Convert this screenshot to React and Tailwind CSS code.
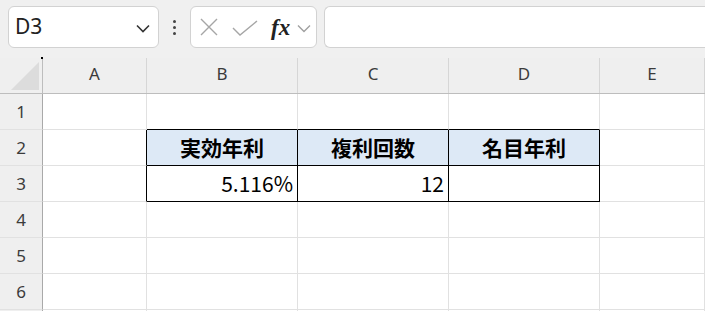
import React from "react";

const cols = ["A", "B", "C", "D", "E"];
const grid = "grid grid-cols-[43px_104px_151px_151px_151px_105px_1fr]";

// which cells get black borders (right / bottom) for the B2:D3 table
const blackRight = (r, c) => (r === 2 || r === 3) && c >= 0 && c <= 3;
const blackBottom = (r, c) => (r >= 1 && r <= 3) && c >= 1 && c <= 3;

const data = {
  "2-1": { text: "実効年利", head: true },
  "2-2": { text: "複利回数", head: true },
  "2-3": { text: "名目年利", head: true },
  "3-1": { text: "5.116%" },
  "3-2": { text: "12" },
};

const Cell = ({ r, c }) => {
  const d = data[`${r}-${c}`];
  const br = blackRight(r, c) ? "border-r-black" : "border-r-[#e1e1e1]";
  const bb = blackBottom(r, c) ? "border-b-black" : "border-b-[#e1e1e1]";
  const bg = d && d.head ? "bg-[#dde9f6]" : "bg-white";
  return (
    <div
      className={`h-[36px] border-r border-b ${br} ${bb} ${bg} flex items-center px-[4px] text-black ${
        d && d.head ? "justify-center font-bold text-[21px]" : "justify-end text-[21px]"
      }`}
      style={{ fontFamily: '"Noto Sans CJK JP", sans-serif' }}
    >
      {d ? d.text : ""}
    </div>
  );
};

export default function App() {
  return (
    <div
      className="w-[705px] h-[311px] overflow-hidden bg-white"
      style={{ fontFamily: '"Noto Sans", "Noto Sans CJK JP", sans-serif' }}
    >
      {/* formula bar area */}
      <div className="bg-[#f0f0f0] h-[58px] pt-[6px] pl-[8px] flex items-start gap-0">
        <div className="w-[151px] h-[42px] bg-white border border-[#d2d2d2] rounded-[6px] flex items-center pl-[6px] pr-[8px]">
          <span className="text-[21px] text-[#222] flex-1">D3</span>
          <svg width="14" height="9" viewBox="0 0 14 9" className="mt-[2px]">
            <path d="M1 1.5 L7 7.5 L13 1.5" fill="none" stroke="#333" strokeWidth="1.6" />
          </svg>
        </div>
        <div className="w-[31px] h-[42px] flex flex-col items-center justify-center gap-[3px]">
          <span className="w-[3px] h-[3px] bg-[#444] rounded-full" />
          <span className="w-[3px] h-[3px] bg-[#444] rounded-full" />
          <span className="w-[3px] h-[3px] bg-[#444] rounded-full" />
        </div>
        <div className="w-[127px] h-[42px] bg-white border border-[#d2d2d2] rounded-[6px] flex items-center pl-[9px]">
          <svg width="18" height="18" viewBox="0 0 18 18">
            <path d="M1 1 L17 17 M17 1 L1 17" stroke="#a6a6a6" strokeWidth="1.4" fill="none" />
          </svg>
          <svg width="26" height="16" viewBox="0 0 26 16" className="ml-[14px] mt-[1px]">
            <path d="M1 8 L8 15 L25 1" stroke="#a6a6a6" strokeWidth="1.4" fill="none" />
          </svg>
          <span
            className="ml-[13px] text-[23px] italic font-bold text-[#222] leading-none"
            style={{ fontFamily: '"Liberation Serif", serif' }}
          >
            fx
          </span>
          <svg width="14" height="9" viewBox="0 0 14 9" className="ml-[7px] mt-[2px]">
            <path d="M1 1.5 L7 7.5 L13 1.5" fill="none" stroke="#a0a0a0" strokeWidth="1.4" />
          </svg>
        </div>
        <div className="ml-[7px] flex-1 h-[42px] bg-white border border-[#d2d2d2] border-r-0 rounded-l-[6px]" />
      </div>

      {/* column headers */}
      <div className={`${grid} h-[36px] bg-[#efefef] border-b border-[#bdbdbd]`}>
        <div className="relative border-r border-[#bdbdbd] flex items-end justify-end pr-[3px] pb-[3px]">
          <svg width="28" height="28" viewBox="0 0 28 28">
            <path d="M28 0 L28 28 L0 28 Z" fill="#dcdcdc" />
          </svg>
          <span className="absolute -right-[1px] -top-[1px] w-[2px] h-[2px] bg-black" />
        </div>
        {cols.map((c) => (
          <div
            key={c}
            className="border-r border-[#d6d6d6] flex items-center justify-center text-[17px] text-[#3b3b3b] pb-[4px]"
          >
            {c}
          </div>
        ))}
        <div />
      </div>

      {/* rows */}
      {[1, 2, 3, 4, 5, 6, 7].map((r) => (
        <div key={r} className={grid}>
          <div className="h-[36px] bg-[#efefef] border-r border-r-[#a9a9a9] border-b border-b-[#e1e1e1] flex items-center justify-center text-[17px] text-[#3b3b3b]">
            {r < 7 ? r : ""}
          </div>
          {[0, 1, 2, 3, 4].map((c) => (
            <Cell key={c} r={r} c={c} />
          ))}
          <div className="h-[36px] border-b border-[#e1e1e1]" />
        </div>
      ))}
    </div>
  );
}
